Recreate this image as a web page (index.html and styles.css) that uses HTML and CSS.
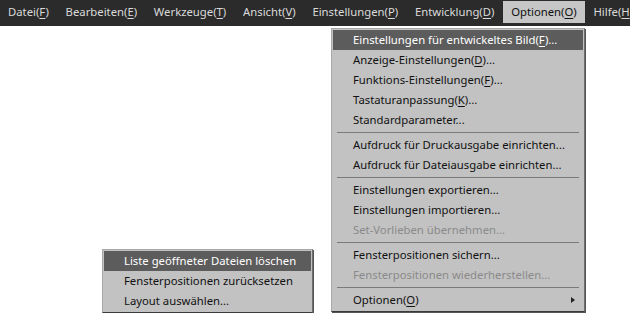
FILE: index.html
```html
<!DOCTYPE html>
<html lang="de">
<head>
  <meta charset="UTF-8">
  <title>Optionen</title>
  <link rel="stylesheet" href="styles.css">
</head>
<body>

  <div class="menubar">
    <span class="bar-item">Datei(<u>F</u>)</span>
    <span class="bar-item">Bearbeiten(<u>E</u>)</span>
    <span class="bar-item">Werkzeuge(<u>T</u>)</span>
    <span class="bar-item">Ansicht(<u>V</u>)</span>
    <span class="bar-item">Einstellungen(<u>P</u>)</span>
    <span class="bar-item">Entwicklung(<u>D</u>)</span>
    <span class="bar-item aktiv">Optionen(<u>O</u>)</span>
    <span class="bar-item">Hilfe(<u>H</u>)</span>
  </div>

  <div class="arbeitsflaeche">

    <div class="menu haupt">
      <div class="item hover">Einstellungen für entwickeltes Bild(<u>F</u>)...</div>
      <div class="item">Anzeige-Einstellungen(<u>D</u>)...</div>
      <div class="item">Funktions-Einstellungen(<u>F</u>)...</div>
      <div class="item">Tastaturanpassung(<u>K</u>)...</div>
      <div class="item">Standardparameter...</div>
      <div class="trenner"></div>
      <div class="item">Aufdruck für Druckausgabe einrichten...</div>
      <div class="item">Aufdruck für Dateiausgabe einrichten...</div>
      <div class="trenner"></div>
      <div class="item">Einstellungen exportieren...</div>
      <div class="item">Einstellungen importieren...</div>
      <div class="item inaktiv">Set-Vorlieben übernehmen...</div>
      <div class="trenner"></div>
      <div class="item">Fensterpositionen sichern...</div>
      <div class="item inaktiv">Fensterpositionen wiederherstellen...</div>
      <div class="trenner"></div>
      <div class="item sub">Optionen(<u>O</u>)<span class="pfeil"></span></div>
    </div>

    <div class="menu unter">
      <div class="item hover">Liste geöffneter Dateien löschen</div>
      <div class="item">Fensterpositionen zurücksetzen</div>
      <div class="item">Layout auswählen...</div>
    </div>

  </div>

</body>
</html>
```

FILE: styles.css
```css
body {
  margin: 0;
  background-color: #ffffff;
  font-family: "Noto Sans", "Open Sans", sans-serif;
  font-size: 11.3px;
  color: #111111;
}

u {
  text-underline-offset: 2px;
}

.menubar {
  display: flex;
  height: 26px;
  background-color: #2b2b2b;
  white-space: nowrap;
  overflow: hidden;
}

.bar-item {
  color: #dadada;
  padding: 0 8.4px;
  margin-top: 1px;
  height: 22px;
  line-height: 22px;
}

.bar-item:first-child {
  padding-left: 8px;
}

.bar-item.aktiv {
  background-color: #c6c6c6;
  color: #111111;
}

.arbeitsflaeche {
  position: relative;
  height: 287px;
}

.menu {
  position: absolute;
  background-color: #c2c2c2;
  border: 1px solid #a8a8a8;
  border-right-color: #6e6e6e;
  border-bottom-color: #3a3a3a;
  box-shadow: 1px 1px 0 #555555;
  padding: 1px;
}

.haupt {
  left: 331px;
  top: 2px;
  width: 250px;
}

.unter {
  left: 102px;
  top: 223px;
  width: 207px;
}

.item {
  height: 20px;
  line-height: 20px;
  padding-left: 20px;
  white-space: nowrap;
  position: relative;
}

.item.hover {
  background-color: #5c5c5c;
  color: #ffffff;
}

.item.inaktiv {
  color: #8a8a8a;
}

.trenner {
  height: 5px;
  margin: 0 4px;
  background: linear-gradient(#c2c2c2 2px, #7a7a7a 2px, #7a7a7a 3px, #c2c2c2 3px);
}

.pfeil {
  position: absolute;
  right: 8px;
  top: 7px;
  width: 0;
  height: 0;
  border-top: 3px solid transparent;
  border-bottom: 3px solid transparent;
  border-left: 4px solid #222222;
}
```
